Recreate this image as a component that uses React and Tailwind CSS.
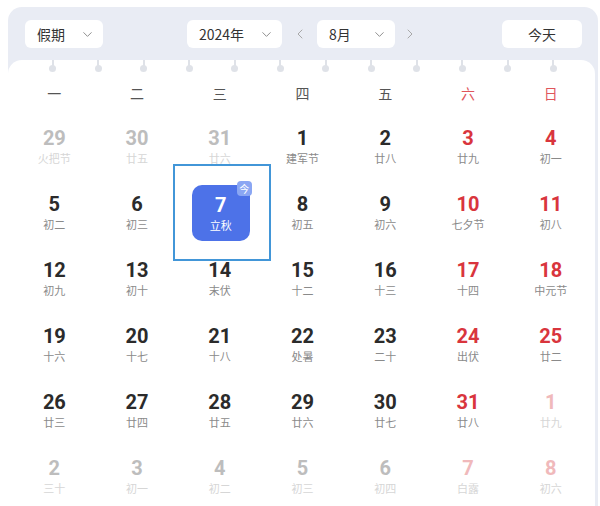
import { ChevronDown, ChevronLeft, ChevronRight } from 'lucide-react'

const FONT = { fontFamily: '"Noto Sans CJK SC", "Noto Sans", sans-serif' }

const WEEK = ['一', '二', '三', '四', '五', '六', '日']

// [day, lunar, muted (other month), today]
const DAYS = [
  [29, '火把节', 1], [30, '廿五', 1], [31, '廿六', 1], [1, '建军节'], [2, '廿八'], [3, '廿九'], [4, '初一'],
  [5, '初二'], [6, '初三'], [7, '立秋', 0, 1], [8, '初五'], [9, '初六'], [10, '七夕节'], [11, '初八'],
  [12, '初九'], [13, '初十'], [14, '末伏'], [15, '十二'], [16, '十三'], [17, '十四'], [18, '中元节'],
  [19, '十六'], [20, '十七'], [21, '十八'], [22, '处暑'], [23, '二十'], [24, '出伏'], [25, '廿二'],
  [26, '廿三'], [27, '廿四'], [28, '廿五'], [29, '廿六'], [30, '廿七'], [31, '廿八'], [1, '廿九', 1],
  [2, '三十', 1], [3, '初一', 1], [4, '初二', 1], [5, '初三', 1], [6, '初四', 1], [7, '白露', 1], [8, '初六', 1],
]

function Select({ label, className }) {
  return (
    <div className={`h-7 bg-white rounded-md flex items-center justify-between pl-3 pr-2 text-[14px] text-[#333] ${className}`}>
      <span>{label}</span>
      <ChevronDown size={15} strokeWidth={1.5} className="text-[#888]" />
    </div>
  )
}

function DayCell({ day, lunar, muted, today, weekend }) {
  if (today) {
    return (
      <div className="h-[66px] flex items-center justify-center">
        <div className="relative w-[58px] h-[56px] mt-[2px] ml-[2px] rounded-[10px] bg-[#4d72e8] flex flex-col items-center justify-center text-white">
          <div className="absolute -left-[19px] -right-[21px] -top-[21px] -bottom-[20px] border-2 border-[#4296d8]" />
          <div className="absolute -top-[4px] -right-[2px] w-[15px] h-[15px] rounded-[4px] bg-[#8aa6f3] text-[10px] leading-[15px] text-center">今</div>
          <span className="text-[20px] font-bold leading-[22px]" style={{ fontFamily: 'Roboto, sans-serif' }}>{day}</span>
          <span className="text-[11px] leading-[15px] mt-[2px]">{lunar}</span>
        </div>
      </div>
    )
  }
  let num = weekend ? 'text-[#d9353d]' : 'text-[#2b2b2b]'
  let sub = 'text-[#8a8a8a]'
  if (muted) {
    num = weekend ? 'text-[#f0b9bb]' : 'text-[#bdbdbd]'
    sub = 'text-[#d6d6d6]'
  }
  return (
    <div className="h-[66px] flex flex-col items-center justify-center">
      <span className={`text-[20px] font-bold leading-[22px] ${num}`} style={{ fontFamily: 'Roboto, sans-serif' }}>{day}</span>
      <span className={`text-[11px] leading-[15px] mt-[2px] ${sub}`}>{lunar}</span>
    </div>
  )
}

export default function App() {
  return (
    <div className="w-[600px] h-[506px] bg-white overflow-hidden pt-[7px]" style={FONT}>
      <div className="ml-[8px] w-[590px] h-[520px] bg-[#e9ecf4] rounded-t-[14px] flex flex-col">
        {/* Toolbar */}
        <div className="h-[53px] flex items-center pl-[17px] pr-[16px] pt-[1px]">
          <Select label="假期" className="w-[78px]" />
          <div className="flex items-center ml-[84px]">
            <Select label="2024年" className="w-[95px]" />
            <ChevronLeft size={16} strokeWidth={1.5} className="text-[#a8a8a8] ml-[10px] mr-[9px]" />
            <Select label="8月" className="w-[78px]" />
            <ChevronRight size={16} strokeWidth={1.5} className="text-[#a8a8a8] ml-[7px]" />
          </div>
          <div className="ml-auto w-[80px] h-7 bg-white rounded-md flex items-center justify-center text-[14px] text-[#333]">今天</div>
        </div>

        {/* Calendar card */}
        <div className="relative flex-1 bg-white rounded-t-[14px] mr-[3px] pl-[5px] pr-[3px]">
          <div className="absolute left-[41px] w-[508px] top-0 flex justify-between">
            {Array.from({ length: 12 }).map((_, i) => (
              <div key={i} className="flex flex-col items-center w-[7px]">
                <div className="w-[2px] h-[6px] bg-[#dfe2e8]" />
                <div className="w-[7px] h-[7px] -mt-[1px] rounded-full bg-[#dfe2e8]" />
              </div>
            ))}
          </div>

          <div className="grid grid-cols-7 pt-[13px]">
            {WEEK.map((w, i) => (
              <div key={w} className={`h-[40px] flex items-center justify-center text-[14px] ${i >= 5 ? 'text-[#e0555b]' : 'text-[#555]'}`}>
                {w}
              </div>
            ))}
            {DAYS.map(([day, lunar, muted, today], i) => (
              <DayCell key={i} day={day} lunar={lunar} muted={muted} today={today} weekend={i % 7 >= 5} />
            ))}
          </div>
        </div>
      </div>
    </div>
  )
}
